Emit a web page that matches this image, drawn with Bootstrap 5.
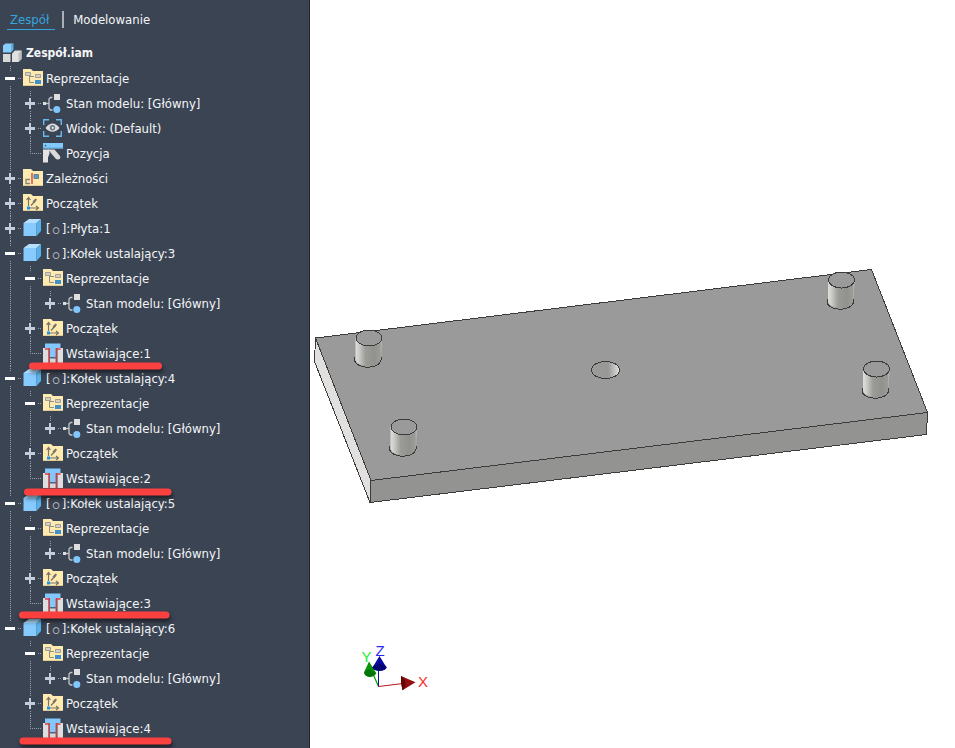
<!DOCTYPE html>
<html lang="pl">
<head>
<meta charset="utf-8">
<meta name="viewport" content="width=device-width, initial-scale=1">
<title>Zespół.iam</title>
<link href="https://cdn.jsdelivr.net/npm/bootstrap@5.3.0/dist/css/bootstrap.min.css" rel="stylesheet">
<style>
  body { font-family: "DejaVu Sans Condensed", "Noto Sans", sans-serif; font-size: 13px; line-height: 25px; }
  .browser-panel { flex: 0 0 310px; background: #3b4453; color: #f4f6f8; border-right: 1px solid #20252e; }
  .mode-tabs { height: 41px; padding: 11px 7px 0; gap: 7px; line-height: 18px; }
  .mode-tab { color: #f4f6f8; text-decoration: none; height: 19px; }
  .mode-tab.current { color: #35a6de; border-bottom: 1px solid #35a6de; padding: 0 6px 0 3px; }
  .mode-sep { width: 2px; height: 17px; background: #a9b0b8; margin-right: 2px; }
  .tree-row { height: 25px; white-space: nowrap; }
  .root-row { padding-left: 3px; gap: 3px; font-weight: bold; font-size: 12px; }
  .tree ul { margin-left: 20px; }
  /* vertical dotted guide of each branch */
  .tree li { background: repeating-linear-gradient(#99a0a8 0 1px, transparent 1px 2px) 10px 0 / 1px 100% no-repeat; }
  .tree li:last-child { background-size: 1px 13px; }
  .toggle { width: 10px; height: 15px; margin: 0 3px 0 5px; background: #3b4453; color: #c3cedb; }
  .toggle[aria-expanded="true"] { color: #fff; }
  .stub { width: 3px; height: 1px; margin-right: 2px; background: repeating-linear-gradient(90deg, #99a0a8 0 1px, transparent 1px 2px); }
  .stub.leaf { width: 11px; margin-left: 10px; }
  .glyph { width: 20px; height: 25px; flex: none; margin-right: 3px; }
  .root-row .glyph { margin-right: 0; }
  .ring { font-size: 9px; line-height: 1; padding: 0 2px; }
  .marks { left: 0; top: 0; width: 309px; height: 748px; pointer-events: none; filter: drop-shadow(1px 3px 2px rgba(0,0,0,.55)); }
  .viewport { min-width: 0; background: #fff; }
  .viewport svg { width: 100%; height: 100vh; }
  .axis-label { font: 15px "Liberation Sans", Arial, sans-serif; }
</style>
<script src="https://cdn.jsdelivr.net/npm/bootstrap@5.3.0/dist/js/bootstrap.bundle.min.js"></script>
</head>
<body>
<svg class="d-none" aria-hidden="true">
  <symbol id="i-minus" viewBox="0 0 10 15"><path d="M0 6h10v3H0z" fill="currentColor"/></symbol>
  <symbol id="i-plus" viewBox="0 0 10 15"><path d="M0 6h4V2h2v4h4v3H6v4H4V9H0z" fill="currentColor"/></symbol>
  <symbol id="i-folder" viewBox="0 0 20 25"><path d="M0 3h8l2 2h10v15H0z" fill="#ffebb0"/><path d="M0 19.5h20" stroke="#e3cb95"/></symbol>
  <symbol id="i-rep" viewBox="0 0 20 25"><use href="#i-folder"/><path d="M6.5 10v6.5H11M6.5 10.5H11" fill="none" stroke="#8f8d85"/><path d="M2.5 6.5h5v3h-5zM12.5 8.5h5v3h-5z" fill="#d4d1c8" stroke="#a29f97"/><path d="M12 14h6v4h-6z" fill="#3f91cb"/></symbol>
  <symbol id="i-state" viewBox="0 0 20 25"><path d="M3 12.500h3M9.500 6.500H7.500l-1.500 1.500v9.500l1.500 1.500h2" fill="none" stroke="#c3c5c9" stroke-width="1.300"/><path d="M0 11h3v3H0zM11 3h6v6h-6z" fill="#dedede"/><circle cx="13.800" cy="18.400" r="3.500" fill="#7fc8ff"/></symbol>
  <symbol id="i-eye" viewBox="0 0 20 25"><path d="M.7 9V3.700H6M13 3.700h5.300V9M18.300 15v5.300H13M6 20.300H.7V15" fill="none" stroke="#69b9ef" stroke-width="1.400"/><path d="M2.500 12c4-6 10-6 14 0-4 5-10 5-14 0z" fill="#dadcdd"/><circle cx="9.500" cy="11.800" r="2.700" fill="#717983"/><circle cx="9.700" cy="11.800" r="1.100" fill="#d9f2ff"/></symbol>
  <symbol id="i-pos" viewBox="0 0 20 25"><path d="M0 2h20v5.500H0z" fill="#82c8fb"/><path d="M0 7h20" stroke="#62addf"/><circle cx="2.500" cy="4.600" r=".8" fill="#345673"/><path d="M0 8.500h6l.5 4-1.500 4v5H0z" fill="#e3e3e3"/><path d="M5 8.500h6.500l5.500 6.500q1 3-1.500 3.500-2 .2-3-1z" fill="#d9d9d9"/></symbol>
  <symbol id="i-rel" viewBox="0 0 20 25"><use href="#i-folder"/><path d="M7 13.500H3v4h4" fill="none" stroke="#85837c" stroke-width="1.300"/><path d="M9 7v11" stroke="#df4c43" stroke-width="1.500"/><path d="M11 8.500h4.500v4H11z" fill="#4ba0d8" stroke="#727d84"/></symbol>
  <symbol id="i-org" viewBox="0 0 20 25"><use href="#i-folder"/><path d="M5.500 15V7M3.500 9l2-2.500 2 2.500M7 17h8M13 15l2.500 2-2.500 2M8 14.500l5-5.500" fill="none" stroke="#77736a" stroke-width="1.200"/><path d="M9.500 10.500l3-3 1.500 1-3 4z" fill="#77736a"/><path d="M4 15.500h3v3H4z" fill="#1992e8"/></symbol>
  <symbol id="i-part" viewBox="0 0 20 25"><path d="M.5 7l5.500-4h12l-4.500 4z" fill="#b5dffc"/><path d="M.5 7h13v13H.5z" fill="#86caff"/><path d="M13.500 7L18 3v12l-4.500 5z" fill="#59b2ea"/></symbol>
  <symbol id="i-insert" viewBox="0 0 20 25"><path d="M0 7h5.500v15H0zM14.500 7H20v15h-5.500z" fill="#dedede"/><path d="M7 16h6v6H7z" fill="#d5d8db"/><path d="M2 2.500h15.500V7H13v9H7V7H2z" fill="#82c8fb"/><path d="M7 16h6v1.500H7z" fill="#4f6477"/><path d="M2 8h4.300v14M17.500 8h-4.300v14" fill="none" stroke="#d93f48" stroke-width="1.300"/></symbol>
  <symbol id="i-asm" viewBox="0 0 20 25"><path d="M0 4.500L2.500 2.500h8L8 4.500V11.500H0z" fill="#8aceff"/><path d="M8 4.500L10.500 2.500v6.500L8 11.500z" fill="#5aafe3"/><path d="M0 13h7.500v8H0z" fill="#d9d9d9"/><path d="M9 12.500l3-3h6.500v8.500l-3 3H9z" fill="#e0e0e0"/><path d="M15.500 12.500l3-3v8.500l-3 3z" fill="#bdbdbd"/></symbol>
</svg>

<div class="d-flex min-vh-100">
  <aside class="browser-panel position-relative">
    <nav class="mode-tabs d-flex align-items-start" aria-label="Tryb">
      <a class="mode-tab current" href="#" aria-current="page">Zespół</a>
      <span class="mode-sep"></span>
      <a class="mode-tab" href="#">Modelowanie</a>
    </nav>
    <div class="tree">
      <div class="tree-row root-row d-flex align-items-center"><svg class="glyph"><use href="#i-asm"/></svg>Zespół.iam</div>
      <div id="nodes"></div>
    </div>
    <svg class="marks position-absolute" aria-hidden="true">
      <path d="M32.500 366H158.500M27.500 492H168M22.500 615H166M23 741H168" stroke="#fb413f" stroke-width="7" stroke-linecap="round"/>
    </svg>
  </aside>

  <main class="viewport flex-grow-1">
    <svg class="d-block" viewBox="310 0 645 748" preserveAspectRatio="xMinYMin meet" role="img" aria-label="Płyta z kołkami ustalającymi">
      <defs>
        <linearGradient id="pinShade"><stop offset="0" stop-color="#deded9"/><stop offset=".1" stop-color="#d2d2ce"/><stop offset=".38" stop-color="#9b9b98"/><stop offset=".7" stop-color="#91918e"/><stop offset=".93" stop-color="#9b9b98"/><stop offset="1" stop-color="#c6c6c3"/></linearGradient>
        <linearGradient id="holeShade"><stop offset="0" stop-color="#9b9b98"/><stop offset=".6" stop-color="#989896"/><stop offset="1" stop-color="#e4e4e2"/></linearGradient>
        <g id="pin">
          <path d="M-13.500 0V22A13 8 0 0 0 12 22L13 0z" fill="url(#pinShade)"/>
          <path d="M-14.500 19V22A13.300 8 0 0 0 12 22V19" fill="none" stroke="#3b3b3b" shape-rendering="crispEdges"/>
          <ellipse rx="13" ry="8" fill="#9a9a9a" stroke="#3b3b3b" shape-rendering="crispEdges"/>
        </g>
      </defs>
      <g stroke="#3b3b3b" stroke-linejoin="round" shape-rendering="crispEdges">
        <path d="M315.500 338L371 480.500 370 502.500 314.500 361.500z" fill="#e1e0de"/>
        <path d="M371 480.500L927.500 412.500 926.500 434.500 370 502.500z" fill="#939391"/>
        <path d="M315.500 338L871.500 269.500 927.500 412.500 371 480.500z" fill="#9a9a9a"/>
        <ellipse cx="605.500" cy="370" rx="14" ry="8.500" fill="url(#holeShade)"/>
      </g>
      <use href="#pin" x="369" y="338"/>
      <use href="#pin" x="404" y="427"/>
      <use href="#pin" x="841.500" y="280"/>
      <use href="#pin" x="876.500" y="369"/>
      <g>
        <path d="M378.500 686.500L373.500 675" stroke="#00a000" stroke-width="1.200"/>
        <path d="M369 661.500L364 672.500q1 4 6 4.500 4-.5 6.500-3.500z" fill="#079407"/>
        <path d="M364 672.500q2-3.500 6-3l6 4q-2 3-6 3.500-5-.5-6-4.500z" fill="#04750a"/>
        <path d="M378.500 686.500V670" stroke="#1010a8"/>
        <path d="M379.500 656l-7 11.500q1 3 7 3.500 6-.5 7-3.500z" fill="#0909a0"/>
        <ellipse cx="379.500" cy="667.500" rx="7" ry="3.300" fill="#050575"/>
        <path d="M378.500 686.500L403 683.500" stroke="#b81818"/>
        <path d="M401 676l14.500 6.200-13 8q-2-7-1.500-14.200z" fill="#941010"/>
        <path d="M401 676q4 2 4.500 7t-3 7.200q-2-7-1.500-14.200z" fill="#660505"/>
      </g>
      <g class="axis-label">
        <text x="361.500" y="662" fill="#20ee30">Y</text>
        <text x="375.500" y="656" fill="#2929f5">Z</text>
        <text x="418" y="687" fill="#f82d2d">X</text>
      </g>
    </svg>
  </main>
</div>

<script>
  // Node: [icon, label, state, children]; state is "open", "closed" or "leaf".
  const part = name => `[<span class="ring">○</span>]:${name}`;
  const pinNode = (number, constraint) => ["part", part(`Kołek ustalający:${number}`), "open", [
    ["rep", "Reprezentacje", "open", [["state", "Stan modelu: [Główny]", "closed"]]],
    ["org", "Początek", "closed"],
    ["insert", `Wstawiające:${constraint}`, "leaf"]
  ]];
  const model = [
    ["rep", "Reprezentacje", "open", [
      ["state", "Stan modelu: [Główny]", "closed"],
      ["eye", "Widok: (Default)", "closed"],
      ["pos", "Pozycja", "leaf"]
    ]],
    ["rel", "Zależności", "closed"],
    ["org", "Początek", "closed"],
    ["part", part("Płyta:1"), "closed"],
    pinNode(3, 1), pinNode(4, 2), pinNode(5, 3), pinNode(6, 4)
  ];
  let count = 0;
  const branch = nodes => `<ul class="list-unstyled mb-0">${nodes.map(([icon, label, state, kids]) => {
    const open = state === "open";
    const id = `node-${++count}`;
    const toggle = state === "leaf" ? "" :
      `<button type="button" class="toggle btn border-0 rounded-0 p-0 d-flex" aria-expanded="${open}" aria-labelledby="${id}"><svg width="10" height="15"><use href="#i-${open ? "minus" : "plus"}"/></svg></button>`;
    return `<li><div class="tree-row d-flex align-items-center">${toggle}<span class="stub${state === "leaf" ? " leaf" : ""}"></span><svg class="glyph"><use href="#i-${icon}"/></svg><span id="${id}">${label}</span></div>${kids ? branch(kids) : ""}</li>`;
  }).join("")}</ul>`;
  const host = document.getElementById("nodes");
  host.innerHTML = branch(model);
  host.firstElementChild.classList.add("ms-0");
</script>
</body>
</html>
